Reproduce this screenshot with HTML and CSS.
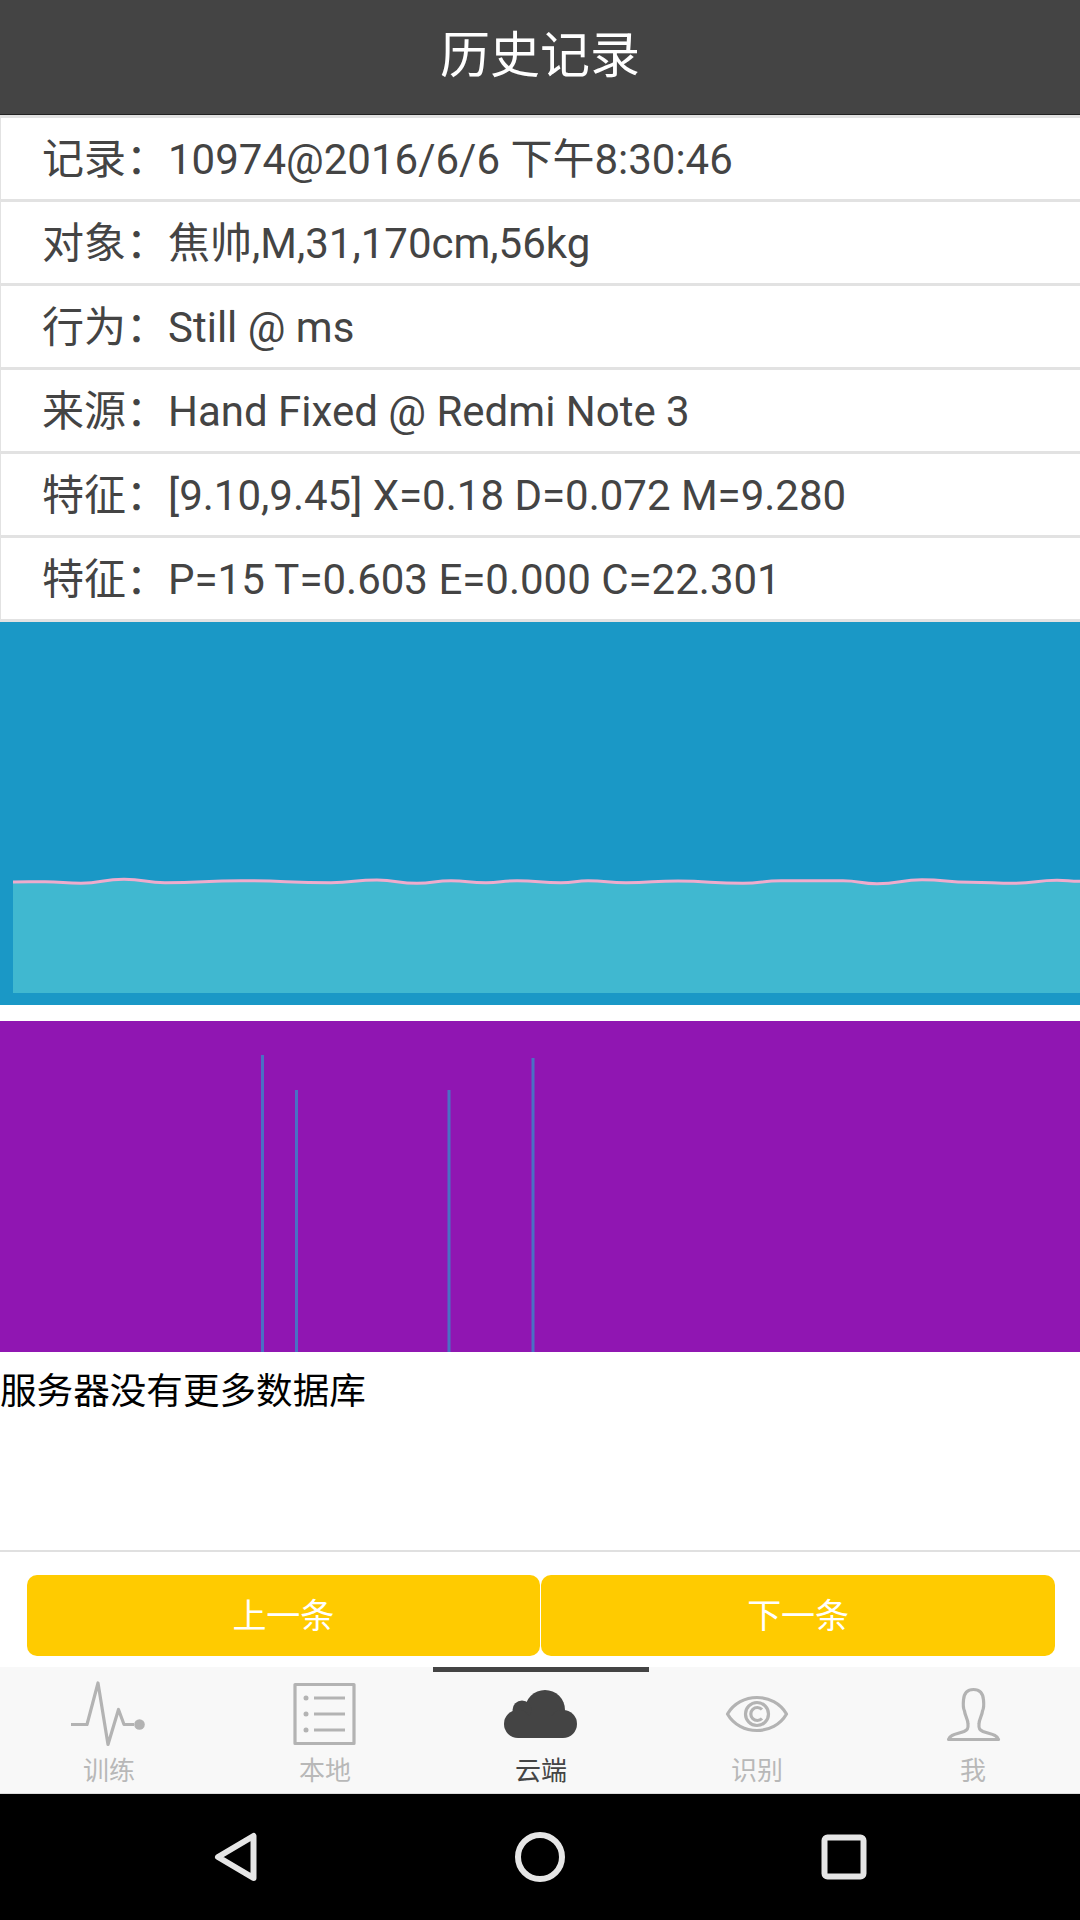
FILE: index.html
```html
<!DOCTYPE html>
<html lang="zh-CN">
<head>
    <meta charset="UTF-8">
    <meta name="viewport" content="width=device-width, initial-scale=1.0">
    <title>历史记录</title>
    <link rel="stylesheet" href="styles.css">
</head>
<body>
    <header class="title-bar">历史记录</header>

    <section class="info-list">
        <div class="info-row"><span class="info-label">记录：</span><span>10974@2016/6/6 下午8:30:46</span></div>
        <div class="info-row"><span class="info-label">对象：</span><span>焦帅,M,31,170cm,56kg</span></div>
        <div class="info-row"><span class="info-label">行为：</span><span>Still @ ms</span></div>
        <div class="info-row"><span class="info-label">来源：</span><span>Hand Fixed @ Redmi Note 3</span></div>
        <div class="info-row"><span class="info-label">特征：</span><span>[9.10,9.45] X=0.18 D=0.072 M=9.280</span></div>
        <div class="info-row"><span class="info-label">特征：</span><span>P=15 T=0.603 E=0.000 C=22.301</span></div>
    </section>

    <!-- waveform chart -->
    <svg class="chart-wave" viewBox="0 0 1080 383">
        <path class="wave-fill" d="M13 260 C29 260 29 259.7 45 259.7 C63 259.7 63 261.3 81 261.3 C102 261.3 102 257.3 124 257.3 C145 257.3 145 260.7 165 260.7 C203 260.7 203 258.7 241 258.7 C286 258.7 286 260.7 331 260.7 C354 260.7 354 258 377 258 C397 258 397 261.3 417 261.3 C434 261.3 434 258.7 451 258.7 C468 258.7 468 260.7 486 260.7 C501 260.7 501 258.7 517 258.7 C539 258.7 539 260.7 561 260.7 C575 260.7 575 258.7 588 258.7 C607 258.7 607 260.7 626 260.7 C652 260.7 652 259 678 259 C710 259 710 261.3 743 261.3 C762 261.3 762 258.7 781 258.7 C812 258.7 812 258.7 843 258.7 C860 258.7 860 261.7 877 261.7 C900 261.7 900 257.7 922 257.7 C946 257.7 946 260.3 970 260.3 C992 260.3 992 261.3 1015 261.3 C1036 261.3 1036 258.3 1057 258.3 C1068 258.3 1068 259.3 1080 259.3 L1080 371 L13 371 Z"/>
        <path class="wave-line" d="M13 260 C29 260 29 259.7 45 259.7 C63 259.7 63 261.3 81 261.3 C102 261.3 102 257.3 124 257.3 C145 257.3 145 260.7 165 260.7 C203 260.7 203 258.7 241 258.7 C286 258.7 286 260.7 331 260.7 C354 260.7 354 258 377 258 C397 258 397 261.3 417 261.3 C434 261.3 434 258.7 451 258.7 C468 258.7 468 260.7 486 260.7 C501 260.7 501 258.7 517 258.7 C539 258.7 539 260.7 561 260.7 C575 260.7 575 258.7 588 258.7 C607 258.7 607 260.7 626 260.7 C652 260.7 652 259 678 259 C710 259 710 261.3 743 261.3 C762 261.3 762 258.7 781 258.7 C812 258.7 812 258.7 843 258.7 C860 258.7 860 261.7 877 261.7 C900 261.7 900 257.7 922 257.7 C946 257.7 946 260.3 970 260.3 C992 260.3 992 261.3 1015 261.3 C1036 261.3 1036 258.3 1057 258.3 C1068 258.3 1068 259.3 1080 259.3"/>
    </svg>

    <!-- spectrum chart -->
    <svg class="chart-peaks" viewBox="0 0 1080 331">
        <line class="peak" x1="262.5" y1="34" x2="262.5" y2="331"/>
        <line class="peak" x1="296.5" y1="69" x2="296.5" y2="331"/>
        <line class="peak" x1="449" y1="69" x2="449" y2="331"/>
        <line class="peak" x1="533" y1="37" x2="533" y2="331"/>
    </svg>

    <div class="message">服务器没有更多数据库</div>

    <div class="pager">
        <button class="pager-btn">上一条</button>
        <button class="pager-btn">下一条</button>
    </div>

    <nav class="tab-bar">
        <div class="tab">
            <svg class="tab-icon" viewBox="1 0 216 84">
                <polyline class="icon-line" points="71,52.5 87,52.5 98,11 108,72.5 118.5,37.5 124,52.5 134,52.5"/>
                <circle class="icon-dot" cx="139.5" cy="52.5" r="5.3"/>
            </svg>
            <span>训练</span>
        </div>
        <div class="tab">
            <svg class="tab-icon" viewBox="1 0 216 84">
                <rect class="icon-line" x="79" y="12.5" width="59" height="59"/>
                <path class="icon-line" d="M98 26H129M98 42H129M98 58H129"/>
                <circle class="icon-dot" cx="90" cy="26" r="2.5"/>
                <circle class="icon-dot" cx="90" cy="42" r="2.5"/>
                <circle class="icon-dot" cx="90" cy="58" r="2.5"/>
            </svg>
            <span>本地</span>
        </div>
        <div class="tab tab-active">
            <svg class="tab-icon" viewBox="1 0 216 84">
                <circle cx="113" cy="38" r="20"/>
                <circle cx="90" cy="38" r="9.5"/>
                <circle cx="86" cy="52" r="14"/>
                <circle cx="131" cy="52" r="14"/>
                <rect x="86" y="44" width="45" height="22"/>
            </svg>
            <span>云端</span>
        </div>
        <div class="tab">
            <svg class="tab-icon" viewBox="1 0 216 84">
                <path class="icon-line" d="M79.5 42C92 20 126 20 138.5 42C126 64 92 64 79.5 42Z"/>
                <circle class="icon-line" cx="109" cy="42" r="11.5"/>
                <path class="icon-line" d="M114 37.5A6.5 6.5 0 1 0 114 46.5"/>
            </svg>
            <span>识别</span>
        </div>
        <div class="tab">
            <svg class="tab-icon" viewBox="1 0 216 84">
                <path class="icon-line" d="M109.5 17.5C103 17.5 100 21 99.5 28C99 33 99 36 100.5 39C101 44 104 47 104 52C104.5 57 103 58 100 59.5C94 62 86 62 84.5 67.5L134.5 67.5C133 62 125 62 119 59.5C116 58 114.5 57 115 52C115 47 118 44 118.5 39C120 36 120 33 119.5 28C119 21 116 17.5 109.5 17.5Z"/>
            </svg>
            <span>我</span>
        </div>
    </nav>

    <div class="system-bar">
        <svg class="sys-icon" viewBox="0 0 64 64"><path d="M14 32L49.5 11V53Z"/></svg>
        <svg class="sys-icon" viewBox="0 0 64 64"><circle cx="32" cy="32" r="22"/></svg>
        <svg class="sys-icon" viewBox="0 0 64 64"><rect x="12.5" y="12.5" width="39" height="39" rx="3"/></svg>
    </div>
</body>
</html>
```

FILE: styles.css
```css
body {
    margin: 0;
    width: 1080px;
    height: 1920px;
    display: flex;
    flex-direction: column;
    font-family: Roboto, "Noto Sans CJK SC", sans-serif;
    color: #444;
    background-color: #fff;
    overflow: hidden;
}

.title-bar {
    height: 114px;
    line-height: 112px;
    text-align: center;
    font-size: 50px;
    color: #fff;
    background-color: #444;
    border-bottom: 1px solid #222;
}

/* info rows */
.info-list {
    border-top: 3px solid #e2e2e2;
    border-left: 1px solid #e2e2e2;
}

.info-row {
    box-sizing: border-box;
    height: 84px;
    padding: 2px 0 0 41px;
    display: flex;
    align-items: center;
    font-size: 42px;
    line-height: 50px;
    border-bottom: 3px solid #e2e2e2;
}

.info-label {
    width: 126px;
    flex-shrink: 0;
}

/* charts */
.chart-wave {
    display: block;
    width: 1080px;
    height: 383px;
    flex-shrink: 0;
    background-color: #1a98c6;
}

.wave-fill {
    fill: #40b8d0;
}

.wave-line {
    fill: none;
    stroke: #eeaccd;
    stroke-width: 3;
}

.chart-peaks {
    display: block;
    width: 1080px;
    height: 331px;
    margin-top: 16px;
    flex-shrink: 0;
    background-color: #9016b2;
}

.peak {
    stroke: #4a70c4;
    stroke-width: 3;
}

.message {
    box-sizing: border-box;
    height: 200px;
    padding-top: 16px;
    line-height: 48px;
    font-size: 36.6px;
    color: #000;
    border-bottom: 2px solid #e0e0e0;
}

/* previous / next buttons */
.pager {
    display: flex;
    gap: 1px;
    padding: 23px 25px 11px 26.5px;
}

.pager-btn {
    flex: 1;
    height: 81px;
    padding: 0 0 4px;
    border: none;
    border-radius: 10px;
    font-family: inherit;
    font-size: 34px;
    color: #fff;
    background-color: #ffcb00;
}

/* bottom tabs */
.tab-bar {
    display: flex;
    height: 126px;
    padding-left: 1px;
    background-color: #f8f8f8;
    border-bottom: 1px solid #ddd;
}

.tab {
    width: 216px;
    flex-shrink: 0;
    display: flex;
    flex-direction: column;
    align-items: center;
    font-size: 26px;
    line-height: 30px;
    color: #b8b8b8;
    border-top: 5px solid transparent;
}

.tab-active {
    color: #444;
    border-top-color: #444;
}

.tab-icon {
    display: block;
    width: 216px;
    height: 84px;
    fill: #444;
}

.icon-line {
    fill: none;
    stroke: #b3b3b3;
    stroke-width: 3.2;
    stroke-linejoin: round;
}

.icon-dot {
    fill: #b3b3b3;
}

/* android nav bar */
.system-bar {
    flex: 1;
    display: flex;
    justify-content: center;
    align-items: center;
    gap: 240px;
    background-color: #000;
}

.sys-icon {
    width: 64px;
    height: 64px;
    fill: none;
    stroke: #e6e6e6;
    stroke-width: 6;
    stroke-linejoin: round;
}
```
